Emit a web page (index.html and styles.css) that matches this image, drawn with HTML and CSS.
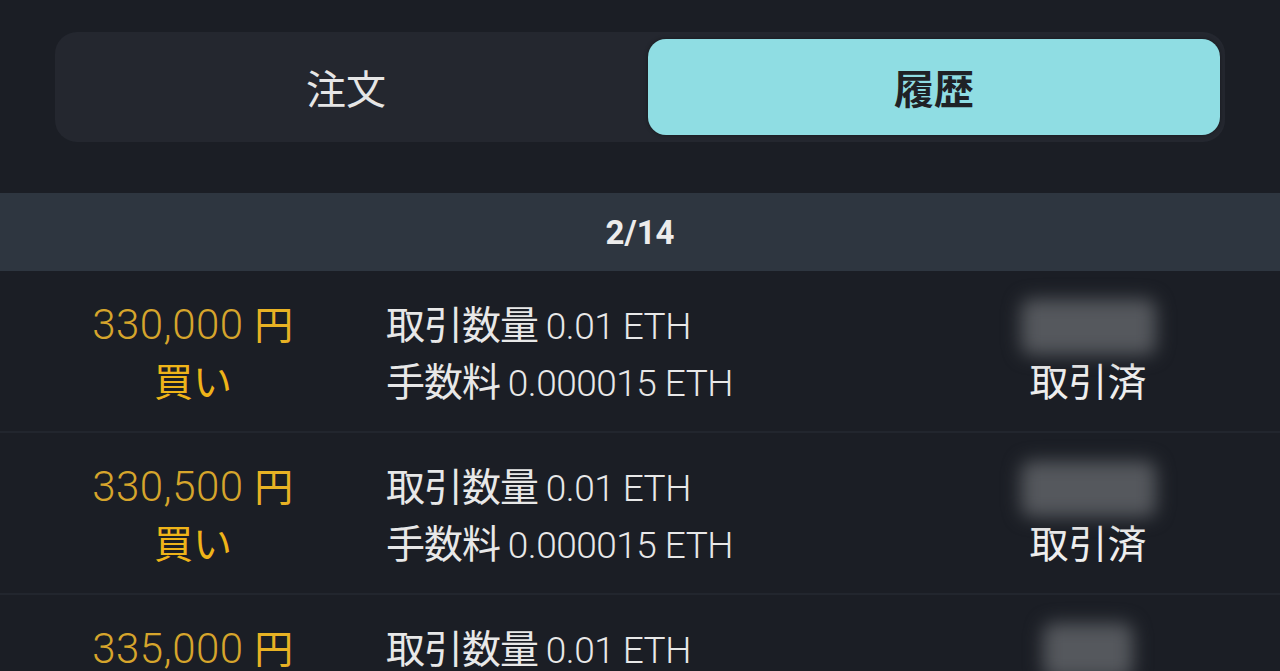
FILE: index.html
```html
<!DOCTYPE html>
<html lang="ja">
<head>
    <meta charset="UTF-8">
    <meta name="viewport" content="width=device-width, initial-scale=1.0">
    <title>履歴</title>
    <link rel="stylesheet" href="styles.css">
</head>
<body>
    <div class="tabs">
        <div class="tab">注文</div>
        <div class="tab active">履歴</div>
    </div>

    <div class="pager">2/14</div>

    <div class="history">
        <div class="row">
            <div class="side">
                <div class="price">330,000 <span class="yen">円</span></div>
                <div class="type">買い</div>
            </div>
            <div class="detail">
                <div class="line">取引数量 <span class="num">0.01 ETH</span></div>
                <div class="line">手数料 <span class="num">0.000015 ETH</span></div>
            </div>
            <div class="status">
                <div class="date"><span class="blur"></span></div>
                <div class="state">取引済</div>
            </div>
        </div>

        <div class="row">
            <div class="side">
                <div class="price">330,500 <span class="yen">円</span></div>
                <div class="type">買い</div>
            </div>
            <div class="detail">
                <div class="line">取引数量 <span class="num">0.01 ETH</span></div>
                <div class="line">手数料 <span class="num">0.000015 ETH</span></div>
            </div>
            <div class="status">
                <div class="date"><span class="blur"></span></div>
                <div class="state">取引済</div>
            </div>
        </div>

        <div class="row">
            <div class="side">
                <div class="price">335,000 <span class="yen">円</span></div>
                <div class="type">買い</div>
            </div>
            <div class="detail">
                <div class="line">取引数量 <span class="num">0.01 ETH</span></div>
                <div class="line">手数料 <span class="num">0.000015 ETH</span></div>
            </div>
            <div class="status">
                <div class="date"><span class="blur small"></span></div>
                <div class="state">取引済</div>
            </div>
        </div>
    </div>
</body>
</html>
```

FILE: styles.css
```css
* {
    margin: 0;
    padding: 0;
    box-sizing: border-box;
}

body {
    font-family: "Noto Sans CJK JP", sans-serif;
    background-color: #1b1e25;
    color: #e8e8e8;
    overflow: hidden;
}

.tabs {
    margin: 32px 55px 0;
    height: 110px;
    padding: 7px 5px;
    background-color: #24272f;
    border-radius: 22px;
    display: grid;
    grid-template-columns: 1fr 1fr;
    gap: 16px;
}

.tab {
    display: flex;
    align-items: center;
    justify-content: center;
    font-size: 40px;
    color: #e6e6e6;
    border-radius: 18px;
}

.tab.active {
    background-color: #8fdde3;
    color: #1f2226;
    font-weight: bold;
    box-shadow: 0 0 4px rgba(0, 0, 0, 0.4);
}

.pager {
    margin-top: 51px;
    height: 78px;
    background-color: #2e3640;
    display: flex;
    align-items: center;
    justify-content: center;
    font-family: Roboto, sans-serif;
    font-weight: bold;
    font-size: 33px;
    color: #ececec;
}

.history {
    height: 400px;
    overflow: hidden;
}

.row {
    display: grid;
    grid-template-columns: 386px 1fr 210px;
    padding-right: 87px;
    height: 162px;
    padding-top: 23px;
    border-bottom: 2px solid #22262e;
}

.side {
    text-align: center;
}

.price, .type, .line, .date, .state {
    height: 57px;
    line-height: 57px;
    white-space: nowrap;
}

.price {
    font-family: Roboto, sans-serif;
    font-weight: 300;
    font-size: 42px;
    letter-spacing: 0.5px;
    color: #d6a52c;
}

.yen {
    font-family: "Noto Sans CJK JP", sans-serif;
    font-weight: normal;
    font-size: 39px;
    color: #e8b224;
}

.type {
    font-size: 39px;
    color: #efb419;
}

.line {
    font-size: 39px;
    letter-spacing: -1px;
}

.num {
    font-family: Roboto, sans-serif;
    font-weight: 300;
    font-size: 37px;
    letter-spacing: -0.5px;
}

.status {
    text-align: center;
}

.date {
    display: flex;
    align-items: center;
    justify-content: center;
}

.blur {
    display: block;
    width: 135px;
    height: 56px;
    margin-top: 8px;
    background-color: #55585d;
    border-radius: 10px;
    filter: blur(9px);
}

.blur.small {
    width: 90px;
}

.state {
    font-size: 39px;
    color: #eeeeee;
}
```
